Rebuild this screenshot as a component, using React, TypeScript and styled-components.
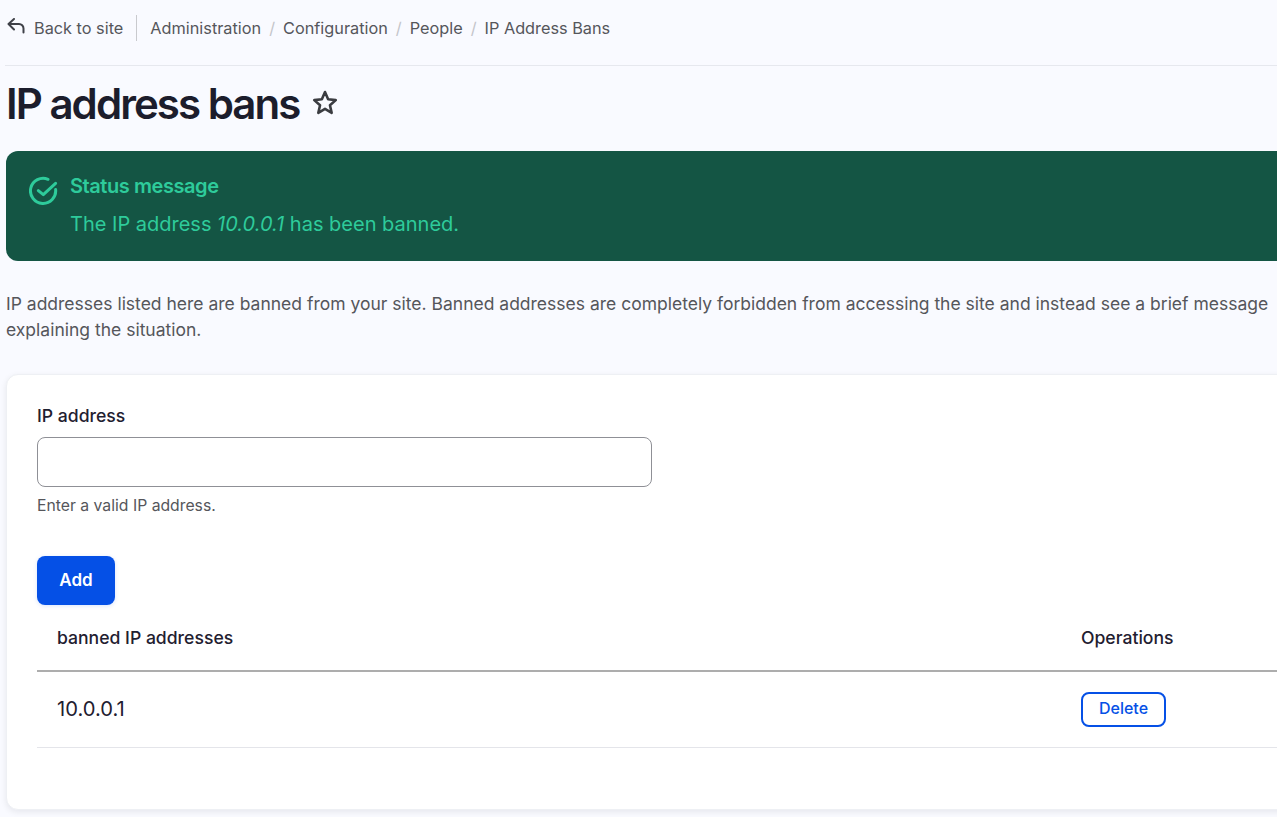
import { FC } from "react";
import styled, { createGlobalStyle } from "styled-components";

const Global = createGlobalStyle`
  html, body {
    margin: 0;
    padding: 0;
    height: 817px;
    overflow: hidden;
    background: #f9faff;
    font-family: Inter, "Noto Sans", sans-serif;
    color: #55565b;
  }
`;

const BackIcon: FC = () => (
  <svg width="20" height="20" viewBox="0 0 20 20" fill="none" stroke="#3f4148" strokeWidth="2" strokeLinecap="round" strokeLinejoin="round">
    <path d="M8 1 2.5 6 8 11.5" />
    <path d="M3 6h10a4.5 4.5 0 0 1 4.5 4.5v4" />
  </svg>
);

const StarIcon: FC = () => (
  <svg width="28" height="28" viewBox="0 0 26 26" fill="none" stroke="#3b3c41" strokeWidth="2.4" strokeLinejoin="round">
    <path d="M13 2.8 15.9 9.6 23 10.3 17.6 15.1 19.2 22.2 13 18.5 6.8 22.2 8.4 15.1 3 10.3 10.1 9.6Z" />
  </svg>
);

const CheckIcon: FC = () => (
  <svg width="30" height="30" viewBox="0 0 30 30" fill="none" stroke="#2ecb9b" strokeWidth="3" strokeLinecap="round" strokeLinejoin="round">
    <path d="M26.6 13.5A12.6 12.6 0 1 1 19 3.3" />
    <path d="M9.3 14.6 14.3 18.6 26.6 7.3" />
  </svg>
);

const crumbs = ["Administration", "Configuration", "People", "IP Address Bans"];

const App: FC = () => (
  <Page>
    <Global />
    <Toolbar>
      <BackLink>
        <BackIcon />
        Back to site
      </BackLink>
      <Crumbs>
        {crumbs.map((c, i) => (
          <Crumb key={c} $first={i === 0}>{c}</Crumb>
        ))}
      </Crumbs>
    </Toolbar>
    <TitleRow>
      <Title>IP address bans</Title>
      <StarIcon />
    </TitleRow>
    <Alert>
      <CheckIcon />
      <AlertBody>
        <AlertTitle>Status message</AlertTitle>
        <AlertText>
          The IP address <em>10.0.0.1</em> has been banned.
        </AlertText>
      </AlertBody>
    </Alert>
    <Intro>
      IP addresses listed here are banned from your site. Banned addresses are completely forbidden from accessing the site and instead see a brief message
      explaining the situation.
    </Intro>
    <Card>
      <Label htmlFor="ip">IP address</Label>
      <Input id="ip" type="text" />
      <Hint>Enter a valid IP address.</Hint>
      <AddButton>Add</AddButton>
      <Table>
        <thead>
          <tr>
            <Th>banned IP addresses</Th>
            <Th $ops>Operations</Th>
          </tr>
        </thead>
        <tbody>
          <tr>
            <Td>10.0.0.1</Td>
            <Td $ops>
              <DeleteButton>Delete</DeleteButton>
            </Td>
          </tr>
        </tbody>
      </Table>
    </Card>
  </Page>
);

export default App;

const Page = styled.div`
  width: 1500px;
  padding-left: 6px;
`;

const Toolbar = styled.div`
  display: flex;
  align-items: center;
  height: 66px;
  padding-bottom: 9px;
  box-sizing: border-box;
  margin-left: -1px;
  border-bottom: 1px solid #e6e8ee;
  font-size: 16.3px;
`;

const BackLink = styled.a`
  display: flex;
  align-items: center;
  gap: 8px;
  height: 26px;
  padding-right: 13px;
  margin-left: 1px;
  border-right: 1px solid #c9cace;
`;

const Crumbs = styled.div`
  display: flex;
  padding-left: 13px;
`;

const Crumb = styled.span<{ $first: boolean }>`
  &::before {
    content: ${(p) => (p.$first ? "none" : '"/"')};
    margin: 0 8px;
    color: #c4c5ca;
  }
`;

const TitleRow = styled.div`
  display: flex;
  align-items: center;
  gap: 12px;
  height: 76px;
  padding-bottom: 2px;
  box-sizing: border-box;
`;

const Title = styled.h1`
  margin: 0;
  font-size: 42px;
  font-weight: 600;
  letter-spacing: -1.95px;
  color: #1c1d2c;
`;

const Alert = styled.div`
  display: flex;
  gap: 11px;
  height: 110px;
  margin-top: 9px;
  padding: 25px 0 0 23px;
  box-sizing: border-box;
  border-radius: 12px;
  background: #145544;
  color: #2ecb9b;
`;

const AlertBody = styled.div`
  margin-top: -2px;
`;

const AlertTitle = styled.div`
  font-size: 20px;
  font-weight: 600;
  line-height: 24px;
  letter-spacing: -0.43px;
`;

const AlertText = styled.div`
  margin-top: 13px;
  font-size: 20px;
  line-height: 26px;
`;

const Intro = styled.p`
  width: 1271px;
  margin: 30px 0 0;
  font-size: 17.5px;
  line-height: 26px;
`;

const Card = styled.div`
  height: 436px;
  margin-top: 31px;
  padding: 30px 0 0 30px;
  box-sizing: border-box;
  background: #fff;
  border-radius: 12px;
  border: 1px solid #eef0f4;
  box-shadow: 0 2px 6px rgba(0, 0, 30, 0.08);
`;

const Label = styled.label`
  display: block;
  font-size: 17.6px;
  font-weight: 500;
  line-height: 22px;
  color: #1f2030;
`;

const Input = styled.input`
  display: block;
  width: 615px;
  height: 50px;
  margin-top: 10px;
  box-sizing: border-box;
  border: 1px solid #8f9096;
  border-radius: 8px;
  background: #fff;
`;

const Hint = styled.div`
  margin-top: 9px;
  font-size: 15.75px;
  line-height: 20px;
`;

const AddButton = styled.button`
  display: block;
  width: 78px;
  height: 49px;
  margin-top: 40px;
  padding: 0 0 2px;
  border: 0;
  border-radius: 8px;
  background: #0550e6;
  color: #fff;
  font: 600 17px Inter, sans-serif;
  box-shadow: 0 1px 4px rgba(5, 80, 230, 0.15);
`;

const Table = styled.table`
  width: 1462px;
  border-collapse: collapse;
  table-layout: fixed;
`;

const Th = styled.th<{ $ops?: boolean }>`
  height: 65px;
  padding: 0 0 0 20px;
  width: ${(p) => (p.$ops ? "418px" : "auto")};
  text-align: left;
  font-size: 17.6px;
  font-weight: 500;
  color: #1f2030;
  border-bottom: 2px solid #adadad;
`;

const Td = styled.td<{ $ops?: boolean }>`
  height: 76px;
  padding: 0 0 1px 20px;
  box-sizing: border-box;
  font-size: 20.2px;
  color: #1f2030;
  border-bottom: 1px solid #e4e5ea;
`;

const DeleteButton = styled.button`
  display: block;
  width: 85px;
  height: 35px;
  margin-top: 2px;
  padding: 0 0 4px;
  border: 2px solid #0550e6;
  border-radius: 8px;
  background: #fff;
  color: #0550e6;
  font: 500 16px Inter, sans-serif;
`;
